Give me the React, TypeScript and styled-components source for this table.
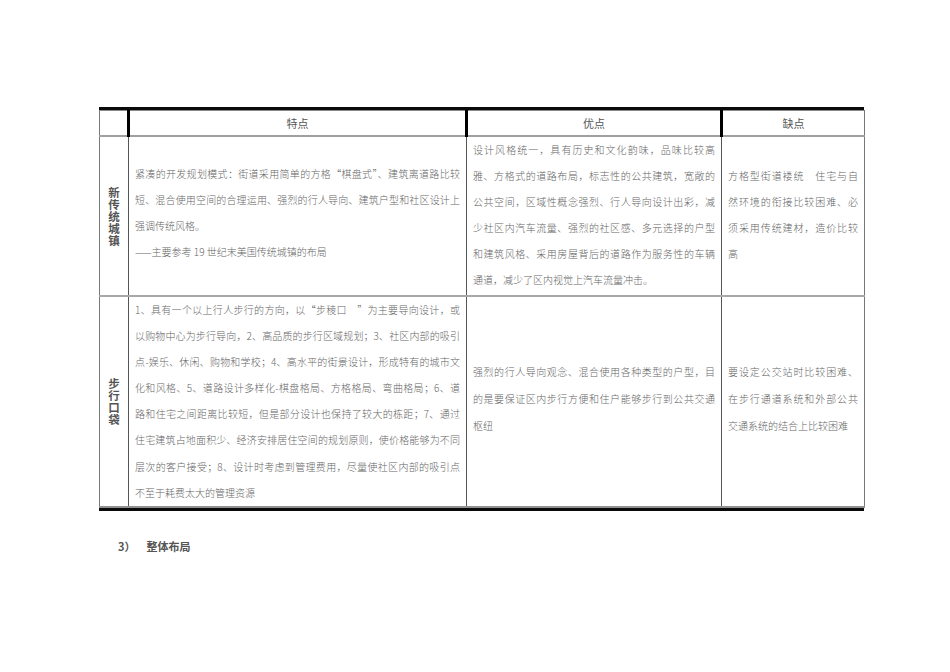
import React from "react";
import styled, { createGlobalStyle } from "styled-components";

const GlobalStyle = createGlobalStyle`
  html, body {
    margin: 0;
    padding: 0;
    background: #ffffff;
  }
  body {
    font-family: "Noto Sans CJK SC", "Liberation Sans", sans-serif;
  }
`;

type CellData = { lines: string[]; lh: number; shift?: number };

const rows: { label: string; height: number; cells: CellData[] }[] = [
  {
    label: "新传统城镇",
    height: 155,
    cells: [
      {
        lh: 25.8,
        shift: 6,
        lines: [
          "紧凑的开发规划模式：街道采用简单的方格“棋盘式”、建筑离道路比较",
          "短、混合使用空间的合理运用、强烈的行人导向、建筑户型和社区设计上",
          "强调传统风格。",
          "——主要参考 19 世纪末美国传统城镇的布局",
        ],
      },
      {
        lh: 26,
        shift: 2,
        lines: [
          "设计风格统一，具有历史和文化韵味，品味比较高",
          "雅、方格式的道路布局，标志性的公共建筑，宽敞的",
          "公共空间，区域性概念强烈、行人导向设计出彩，减",
          "少社区内汽车流量、强烈的社区感、多元选择的户型",
          "和建筑风格、采用房屋背后的道路作为服务性的车辆",
          "通道，减少了区内视觉上汽车流量冲击。",
        ],
      },
      {
        lh: 26,
        shift: 2,
        lines: [
          "方格型街道褛统　住宅与自",
          "然环境的衔接比较困难、必",
          "须采用传统建材，造价比较",
          "高",
        ],
      },
    ],
  },
  {
    label: "步行口袋",
    height: 210,
    cells: [
      {
        lh: 26.1,
        lines: [
          "1、具有一个以上行人步行的方向，以“步稜口　”为主要导向设计，或",
          "以购物中心为步行导向，2、高品质的步行区域规划；3、社区内部的吸引",
          "点-娱乐、休闲、购物和学校；4、高水平的街景设计，形成特有的城市文",
          "化和风格、5、道路设计多样化-棋盘格局、方格格局、弯曲格局；6、道",
          "路和住宅之间距离比较短，但是部分设计也保持了较大的栋距；7、通过",
          "住宅建筑占地面积少、经济安排居住空间的规划原则，使价格能够为不同",
          "层次的客户接受；8、设计时考虑到管理费用，尽量使社区内部的吸引点",
          "不至于耗费太大的管理资源",
        ],
      },
      {
        lh: 26.6,
        shift: 4,
        lines: [
          "强烈的行人导向观念、混合使用各种类型的户型，目",
          "的是要保证区内步行方便和住户能够步行到公共交通",
          "枢纽",
        ],
      },
      {
        lh: 26.6,
        shift: 4,
        lines: [
          "要设定公交站时比较困难、",
          "在步行通道系统和外部公共",
          "交通系统的结合上比较困难",
        ],
      },
    ],
  },
];

const headers = ["特点", "优点", "缺点"];

const App = () => {
  return (
    <Page>
      <GlobalStyle />
      <Frame>
        <Table>
          <colgroup>
            <col style={{ width: 29 }} />
            <col style={{ width: 338 }} />
            <col style={{ width: 255 }} />
            <col style={{ width: 143 }} />
          </colgroup>
          <thead>
            <tr>
              <HeadCell first />
              {headers.map((h, i) => (
                <HeadCell key={h} last={i === headers.length - 1}>
                  {h}
                </HeadCell>
              ))}
            </tr>
          </thead>
          <tbody>
            {rows.map((row, r) => (
              <tr key={row.label} style={{ height: row.height }}>
                <LabelCell lastRow={r === rows.length - 1}>
                  <Label>{row.label}</Label>
                </LabelCell>
                {row.cells.map((cell, c) => (
                  <BodyCell
                    key={c}
                    lastRow={r === rows.length - 1}
                    last={c === row.cells.length - 1}
                    shift={cell.shift ?? 0}
                  >
                    {cell.lines.map((line, i) => (
                      <Line
                        key={i}
                        lh={cell.lh}
                        justify={i < cell.lines.length - 1 && line.length > 8}
                      >
                        {line}
                      </Line>
                    ))}
                  </BodyCell>
                ))}
              </tr>
            ))}
          </tbody>
        </Table>
      </Frame>
      <Heading>
        <span>3）</span>
        <span>整体布局</span>
      </Heading>
    </Page>
  );
};

export default App;

const Page = styled.div`
  width: 950px;
  min-height: 672px;
  padding: 107px 0 0 99px;
  box-sizing: border-box;
`;

const Frame = styled.div`
  width: 765px;
  border-top: 3px solid #0a0a0a;
  border-bottom: 3px solid #0a0a0a;
`;

const Table = styled.table`
  width: 765px;
  table-layout: fixed;
  border-collapse: collapse;
  border-spacing: 0;
`;

const HeadCell = styled.th<{ first?: boolean; last?: boolean }>`
  height: 24px;
  padding: 0;
  font-size: 11px;
  font-weight: 400;
  color: #555;
  text-align: center;
  vertical-align: middle;
  border-top: 1px solid #8a8a8a;
  border-bottom: 2px solid #a0a0a0;
  border-left: ${(p) => (p.first ? "1px solid #777" : "3px solid #000")};
  border-right: ${(p) => (p.last ? "1px solid #777" : "none")};
`;

const LabelCell = styled.td<{ lastRow?: boolean }>`
  padding: 0;
  vertical-align: middle;
  text-align: center;
  border-left: 1px solid #777;
  border-right: 1px solid #555;
  border-bottom: ${(p) => (p.lastRow ? "2px solid #909090" : "2px solid #a8a8a8")};
`;

const Label = styled.div`
  width: 12px;
  margin: 0 auto;
  font-size: 11.5px;
  line-height: 12px;
  font-weight: 700;
  color: #555;
  word-break: break-all;
`;

const BodyCell = styled.td<{ lastRow?: boolean; last?: boolean; shift: number }>`
  padding: 0 6px ${(p) => p.shift}px 6px;
  vertical-align: middle;
  border-right: ${(p) => (p.last ? "1px solid #777" : "1px solid #555")};
  border-bottom: ${(p) => (p.lastRow ? "2px solid #909090" : "2px solid #a8a8a8")};
`;

const Line = styled.div<{ lh: number; justify?: boolean }>`
  font-size: 10px;
  font-weight: 300;
  line-height: ${(p) => p.lh}px;
  color: #666;
  text-align: ${(p) => (p.justify ? "justify" : "left")};
  text-align-last: ${(p) => (p.justify ? "justify" : "left")};
  white-space: nowrap;
`;

const Heading = styled.div`
  display: flex;
  gap: 11px;
  margin: 27px 0 0 19px;
  font-size: 11px;
  font-weight: 700;
  color: #555;
`;
